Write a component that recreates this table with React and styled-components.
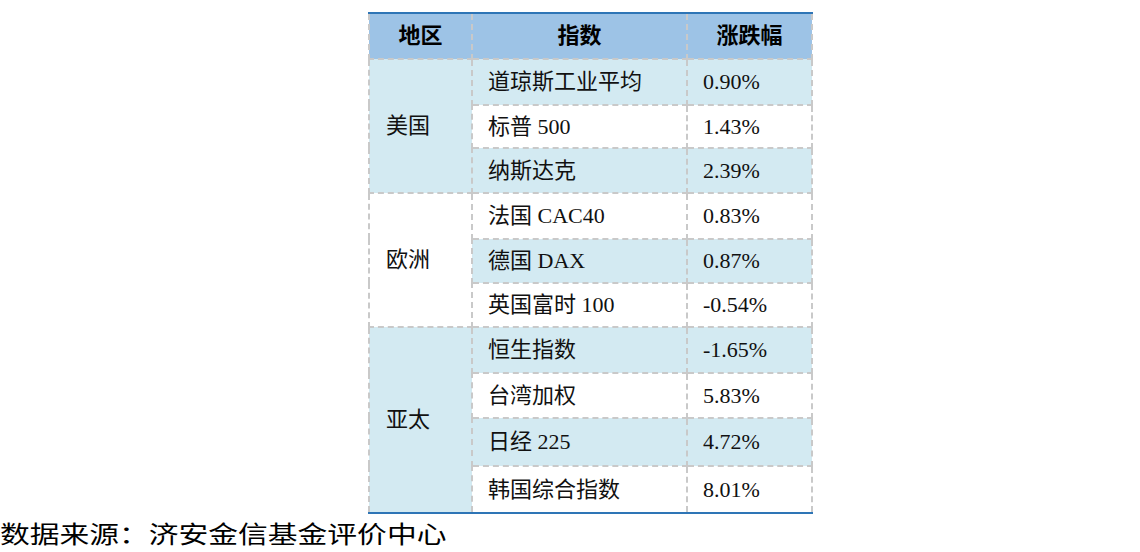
import styled, { createGlobalStyle } from "styled-components";

const GlobalStyle = createGlobalStyle`
  html, body {
    margin: 0;
    padding: 0;
    background: #ffffff;
  }
  body {
    font-family: "Liberation Serif", "Noto Sans CJK SC", serif;
    color: #111;
  }
`;

const groups = [
  {
    region: "美国",
    shade: true,
    rows: [
      { name: "道琼斯工业平均", change: "0.90%", h: 46 },
      { name: "标普 500", change: "1.43%", h: 43 },
      { name: "纳斯达克", change: "2.39%", h: 45 },
    ],
  },
  {
    region: "欧洲",
    shade: false,
    rows: [
      { name: "法国 CAC40", change: "0.83%", h: 46 },
      { name: "德国 DAX", change: "0.87%", h: 44 },
      { name: "英国富时 100", change: "-0.54%", h: 44 },
    ],
  },
  {
    region: "亚太",
    shade: true,
    rows: [
      { name: "恒生指数", change: "-1.65%", h: 46 },
      { name: "台湾加权", change: "5.83%", h: 45 },
      { name: "日经 225", change: "4.72%", h: 48 },
      { name: "韩国综合指数", change: "8.01%", h: 47 },
    ],
  },
];

export default function App() {
  let rowIndex = 0;
  return (
    <>
      <GlobalStyle />
      <Page>
        <Table>
          <colgroup>
            <col style={{ width: 103 }} />
            <col style={{ width: 215 }} />
            <col style={{ width: 125 }} />
          </colgroup>
          <thead>
            <HeadRow>
              <HeadCell>地区</HeadCell>
              <HeadCell>指数</HeadCell>
              <HeadCell>涨跌幅</HeadCell>
            </HeadRow>
          </thead>
          <tbody>
            {groups.map((g) =>
              g.rows.map((r, i) => {
                const shade = rowIndex++ % 2 === 0;
                return (
                  <tr key={r.name} style={{ height: r.h }}>
                    {i === 0 && (
                      <RegionCell rowSpan={g.rows.length} $shade={g.shade}>
                        {g.region}
                      </RegionCell>
                    )}
                    <BodyCell $shade={shade}>{r.name}</BodyCell>
                    <BodyCell $shade={shade}>{r.change}</BodyCell>
                  </tr>
                );
              })
            )}
          </tbody>
        </Table>
        <Source>数据来源：济安金信基金评价中心</Source>
      </Page>
    </>
  );
}

const Page = styled.div`
  padding-top: 12px;
  width: 1140px;
  overflow: hidden;
`;

const Table = styled.table`
  margin-left: 368px;
  width: 443px;
  border-collapse: collapse;
  table-layout: fixed;
  border-top: 2px solid #2e75b6;
  border-bottom: 2px solid #2e75b6;
  font-size: 22px;
  line-height: 1;
`;

const HeadRow = styled.tr`
  height: 46px;
  background: #9dc3e6;
`;

const HeadCell = styled.th`
  padding: 0;
  text-align: center;
  font-weight: bold;
  color: #000;
  border-left: 2px dashed #c9c9c9;
  border-right: 2px dashed #c9c9c9;
  border-bottom: 2px dashed #c9c9c9;
`;

const RegionCell = styled.td`
  padding: 0 0 0 16px;
  vertical-align: middle;
  background: ${(p) => (p.$shade ? "#d3eaf2" : "#ffffff")};
  border: 2px dashed #c9c9c9;
`;

const BodyCell = styled.td`
  padding: 0 0 0 15px;
  vertical-align: middle;
  white-space: nowrap;
  background: ${(p) => (p.$shade ? "#d3eaf2" : "#ffffff")};
  border: 2px dashed #c9c9c9;
`;

const Source = styled.div`
  width: max-content;
  margin-top: 3px;
  font-family: "Noto Sans CJK SC", sans-serif;
  font-size: 24px;
  line-height: 32px;
  color: #000;
  white-space: nowrap;
  transform: scaleX(1.24);
  transform-origin: left center;
`;
